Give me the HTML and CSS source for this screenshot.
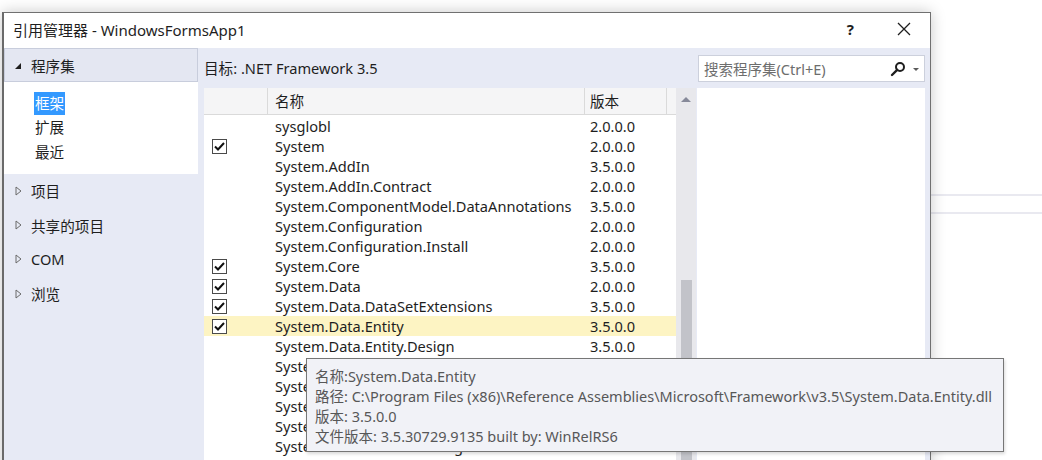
FILE: index.html
```html
<!DOCTYPE html>
<html>
<head>
<meta charset="utf-8">
<link rel="stylesheet" href="styles.css">
</head>
<body>
<div class="backdrop">
  <div class="bg-line l1"></div>
  <div class="bg-line l2"></div>
</div>
<div class="dialog">
  <div class="titlebar">
    <span class="title">引用管理器 - WindowsFormsApp1</span>
    <span class="help">?</span>
    <svg class="close" width="14" height="14" viewBox="0 0 14 14"><path d="M1 1L13 13M13 1L1 13" stroke="#1e1e1e" stroke-width="1.3" fill="none"/></svg>
  </div>
  <div class="content">
    <div class="nav">
      <div class="nav-head">
        <svg class="tri-open" width="8" height="8" viewBox="0 0 8 8"><path d="M7 1V7H1Z" fill="#1e1e1e"/></svg>
        <span>程序集</span>
      </div>
      <div class="nav-sub">
        <div class="sub"><span class="sub-label sel">框架</span></div>
        <div class="sub"><span class="sub-label">扩展</span></div>
        <div class="sub"><span class="sub-label">最近</span></div>
      </div>
      <div class="nav-item"><svg class="tri" width="7" height="10" viewBox="0 0 7 10"><path d="M1 1L6 5L1 9Z" fill="none" stroke="#6a6a6a" stroke-width="1"/></svg><span>项目</span></div>
      <div class="nav-item"><svg class="tri" width="7" height="10" viewBox="0 0 7 10"><path d="M1 1L6 5L1 9Z" fill="none" stroke="#6a6a6a" stroke-width="1"/></svg><span>共享的项目</span></div>
      <div class="nav-item"><svg class="tri" width="7" height="10" viewBox="0 0 7 10"><path d="M1 1L6 5L1 9Z" fill="none" stroke="#6a6a6a" stroke-width="1"/></svg><span>COM</span></div>
      <div class="nav-item"><svg class="tri" width="7" height="10" viewBox="0 0 7 10"><path d="M1 1L6 5L1 9Z" fill="none" stroke="#6a6a6a" stroke-width="1"/></svg><span>浏览</span></div>
    </div>
    <div class="main">
      <div class="toolbar">
        <div class="target">目标: .NET Framework 3.5</div>
        <div class="search">
          <span class="ph">搜索程序集(Ctrl+E)</span>
          <svg class="mag" width="16" height="16" viewBox="0 0 16 16"><circle cx="10" cy="6" r="4" fill="none" stroke="#1e1e1e" stroke-width="2"/><path d="M7.2 8.8L2 14" stroke="#1e1e1e" stroke-width="2.4" stroke-linecap="round"/></svg>
          <svg class="drop" width="6" height="4" viewBox="0 0 6 4"><path d="M0 0H6L3 3Z" fill="#5a5a5a"/></svg>
        </div>
      </div>
      <div class="panes">
        <div class="grid">
          <div class="list">
            <div class="head">
              <div class="c-chk"></div>
              <div class="c-name">名称</div>
              <div class="c-ver">版本</div>
              <div class="c-rest"></div>
            </div>
            <div class="row"><div class="c-chk"></div><div class="c-name">sysglobl</div><div class="c-ver">2.0.0.0</div></div>
            <div class="row"><div class="c-chk"><span class="box"><svg width="11" height="9" viewBox="0 0 11 9"><path d="M1 4.5L4 7.5L10 1" fill="none" stroke="#111" stroke-width="2"/></svg></span></div><div class="c-name">System</div><div class="c-ver">2.0.0.0</div></div>
            <div class="row"><div class="c-chk"></div><div class="c-name">System.AddIn</div><div class="c-ver">3.5.0.0</div></div>
            <div class="row"><div class="c-chk"></div><div class="c-name">System.AddIn.Contract</div><div class="c-ver">2.0.0.0</div></div>
            <div class="row"><div class="c-chk"></div><div class="c-name">System.ComponentModel.DataAnnotations</div><div class="c-ver">3.5.0.0</div></div>
            <div class="row"><div class="c-chk"></div><div class="c-name">System.Configuration</div><div class="c-ver">2.0.0.0</div></div>
            <div class="row"><div class="c-chk"></div><div class="c-name">System.Configuration.Install</div><div class="c-ver">2.0.0.0</div></div>
            <div class="row"><div class="c-chk"><span class="box"><svg width="11" height="9" viewBox="0 0 11 9"><path d="M1 4.5L4 7.5L10 1" fill="none" stroke="#111" stroke-width="2"/></svg></span></div><div class="c-name">System.Core</div><div class="c-ver">3.5.0.0</div></div>
            <div class="row"><div class="c-chk"><span class="box"><svg width="11" height="9" viewBox="0 0 11 9"><path d="M1 4.5L4 7.5L10 1" fill="none" stroke="#111" stroke-width="2"/></svg></span></div><div class="c-name">System.Data</div><div class="c-ver">2.0.0.0</div></div>
            <div class="row"><div class="c-chk"><span class="box"><svg width="11" height="9" viewBox="0 0 11 9"><path d="M1 4.5L4 7.5L10 1" fill="none" stroke="#111" stroke-width="2"/></svg></span></div><div class="c-name">System.Data.DataSetExtensions</div><div class="c-ver">3.5.0.0</div></div>
            <div class="row hl"><div class="c-chk"><span class="box"><svg width="11" height="9" viewBox="0 0 11 9"><path d="M1 4.5L4 7.5L10 1" fill="none" stroke="#111" stroke-width="2"/></svg></span></div><div class="c-name">System.Data.Entity</div><div class="c-ver">3.5.0.0</div></div>
            <div class="row"><div class="c-chk"></div><div class="c-name">System.Data.Entity.Design</div><div class="c-ver">3.5.0.0</div></div>
            <div class="row"><div class="c-chk"></div><div class="c-name">System.Data.Linq</div><div class="c-ver">3.5.0.0</div></div>
            <div class="row"><div class="c-chk"></div><div class="c-name">System.Data.OracleClient</div><div class="c-ver">2.0.0.0</div></div>
            <div class="row"><div class="c-chk"></div><div class="c-name">System.Data.Services</div><div class="c-ver">3.5.0.0</div></div>
            <div class="row"><div class="c-chk"></div><div class="c-name">System.Data.Services.Client</div><div class="c-ver">3.5.0.0</div></div>
            <div class="row"><div class="c-chk"></div><div class="c-name">System.Data.Services.Design</div><div class="c-ver">3.5.0.0</div></div>
          </div>
          <div class="scroll">
            <svg class="arrow" width="10" height="6" viewBox="0 0 10 6"><path d="M0 6L5 1L10 6Z" fill="#868999"/></svg>
            <div class="thumb"></div>
          </div>
        </div>
        <div class="detail"></div>
      </div>
    </div>
  </div>
</div>
<div class="tooltip">
  <div>名称:System.Data.Entity</div>
  <div>路径: C:\Program Files (x86)\Reference Assemblies\Microsoft\Framework\v3.5\System.Data.Entity.dll</div>
  <div>版本: 3.5.0.0</div>
  <div>文件版本: 3.5.30729.9135 built by: WinRelRS6</div>
</div>
</body>
</html>
```

FILE: styles.css
```css
* { box-sizing: border-box; }
html, body { margin: 0; padding: 0; }
body {
  width: 1042px;
  height: 460px;
  overflow: hidden;
  background: #ffffff;
  font-family: "Noto Sans", "Noto Sans CJK SC", sans-serif;
  font-size: 14.6px;
  color: #1e1e1e;
  position: relative;
}
.backdrop { position: absolute; inset: 0; }
.bg-line { position: absolute; left: 930px; right: 0; height: 2px; background: #e9e9f0; }
.l1 { top: 194px; }
.l2 { top: 212px; }

.dialog {
  position: relative;
  margin: 12px 0 0 2px;
  width: 929px;
  height: 460px;
  border: 1px solid #707070;
  border-left: 2px solid #6a6a6a;
  border-bottom: none;
  background: #ffffff;
  box-shadow: 0 0 14px rgba(0,0,0,0.22);
  display: flex;
  flex-direction: column;
}
.titlebar {
  height: 35px;
  display: flex;
  align-items: center;
  padding: 0 0 3px 9px;
  background: #fff;
}
.title { flex: 1; font-size: 15px; }
.help { font-weight: 700; font-size: 15px; margin-right: 43px; }
.close { margin-right: 19px; }

.content {
  flex: 1;
  display: flex;
  background: #e7eaf5;
}
.nav { width: 194px; display: flex; flex-direction: column; }
.nav-head {
  height: 34px;
  border: 1px solid #c8cddc;
  background: #e4e7f2;
  display: flex;
  align-items: center;
  padding-left: 9px;
}
.tri-open { margin-right: 9px; margin-top: 1px; }
.nav-sub {
  background: #ffffff;
  height: 92px;
  padding-top: 9px;
}
.sub { height: 24.5px; padding-left: 30px; display: flex; align-items: center; }
.sub-label { padding: 0 1px; line-height: 23px; }
.sel { background: #3399ff; color: #fff; }
.nav-item {
  height: 34.4px;
  display: flex;
  align-items: center;
  padding: 0 0 1px 11px;
}
.tri { margin-right: 9px; }

.main { flex: 1; padding: 0 5px 0 6px; display: flex; flex-direction: column; }
.toolbar { height: 40px; display: flex; align-items: flex-start; }
.target { flex: 1; padding-top: 9px; }
.search {
  margin-top: 7px;
  width: 227px;
  height: 27px;
  background: #fff;
  border: 1px solid #ccd0dc;
  display: flex;
  align-items: center;
  padding-left: 5px;
}
.ph { flex: 1; color: #6d6d6d; font-size: 14.5px; }
.mag { margin-right: 7px; }
.drop { margin-right: 5px; margin-top: 2px; }

.panes { flex: 1; display: flex; gap: 1px; }
.grid { width: 492px; display: flex; background: #fff; }
.list { width: 472px; }
.head {
  height: 27px;
  display: flex;
  background: #f5f5f6;
  border-bottom: 1px solid #dadada;
  margin-bottom: 1px;
}
.head > div { border-right: 1px solid #dadada; display: flex; align-items: center; padding-bottom: 1px; }
.head .c-rest { flex: 1; border-right: none; }
.c-chk { width: 64px; flex: none; display: flex; align-items: center; padding-left: 8px; }
.c-name { width: 317px; flex: none; padding-left: 7px; white-space: nowrap; }
.c-ver { width: 82px; flex: none; padding-left: 5px; }
.row { height: 20px; display: flex; align-items: center; }
.hl { background: #fdf4c3; }
.box {
  width: 15px; height: 15px;
  border: 1px solid #4a4a4a;
  background: #fff;
  display: flex; align-items: center; justify-content: center;
}
.scroll {
  width: 20px;
  background: #e8e8ec;
  display: flex;
  flex-direction: column;
  align-items: center;
}
.arrow { margin-top: 8px; }
.thumb { margin-top: 178px; width: 11px; flex: 1; background: #c2c3c9; }
.detail { flex: 1; background: #fff; }

.tooltip {
  position: absolute;
  left: 306px;
  top: 358px;
  width: 698px;
  height: 94px;
  background: #f1f2f7;
  border: 1px solid #767676;
  padding: 7px 0 0 8px;
  color: #575757;
  font-size: 14.5px;
  box-shadow: 1px 2px 3px rgba(0,0,0,0.15);
}
.tooltip div { height: 20px; line-height: 20px; white-space: nowrap; }
```
